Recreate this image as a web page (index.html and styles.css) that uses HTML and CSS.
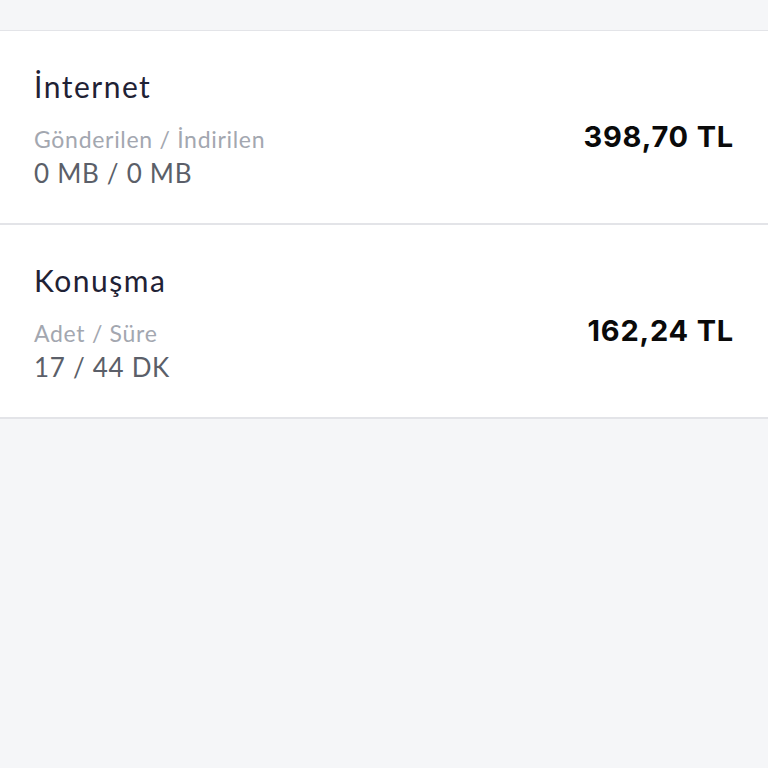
FILE: index.html
```html
<!DOCTYPE html>
<html lang="tr">
<head>
  <meta charset="UTF-8">
  <meta name="viewport" content="width=device-width, initial-scale=1.0">
  <title>Kullanım Detayı</title>
  <link rel="stylesheet" href="styles.css">
</head>
<body>
  <div class="top-gap"></div>

  <ul class="usage-list">
    <li class="usage-item">
      <div class="usage-info">
        <h2 class="usage-title">İnternet</h2>
        <div class="usage-label">Gönderilen / İndirilen</div>
        <div class="usage-value">0 MB / 0 MB</div>
      </div>
      <div class="usage-amount">398,70 TL</div>
    </li>
    <li class="usage-item">
      <div class="usage-info">
        <h2 class="usage-title">Konuşma</h2>
        <div class="usage-label">Adet / Süre</div>
        <div class="usage-value">17 / 44 DK</div>
      </div>
      <div class="usage-amount">162,24 TL</div>
    </li>
  </ul>
</body>
</html>
```

FILE: styles.css
```css
:root {
  --background: #f5f6f8;
  --card: #ffffff;
  --border: #e3e4e8;
  --title: #1f2235;
  --label: #a3a7b0;
  --value: #5b5f69;
  --amount: #0a0a0a;
}

* {
  margin: 0;
  padding: 0;
  box-sizing: border-box;
}

body {
  font-family: Lato, "Noto Sans", sans-serif;
  background-color: var(--background);
  min-height: 100vh;
}

.top-gap {
  height: 31px;
  border-bottom: 1px solid var(--border);
}

.usage-list {
  list-style: none;
}

.usage-item {
  display: flex;
  align-items: center;
  justify-content: space-between;
  background-color: var(--card);
  border-bottom: 2px solid var(--border);
  height: 194px;
  padding: 0 34px 0 34px;
}

.usage-info {
  display: flex;
  flex-direction: column;
  margin-top: 8px;
}

.usage-title {
  font-size: 30px;
  font-weight: 400;
  color: var(--title);
  line-height: 36px;
  letter-spacing: 1.5px;
  margin-bottom: 21px;
  margin-top: -4px;
}

.usage-label {
  font-size: 23px;
  color: var(--label);
  line-height: 28px;
  letter-spacing: 0.7px;
}

.usage-value {
  font-size: 26px;
  color: var(--value);
  line-height: 34px;
  letter-spacing: 0.7px;
  margin-top: 3px;
}

.usage-amount {
  font-family: Inter, Lato, sans-serif;
  font-size: 29px;
  font-weight: 700;
  letter-spacing: 0.8px;
  color: var(--amount);
  margin-top: 18px;
}
```
